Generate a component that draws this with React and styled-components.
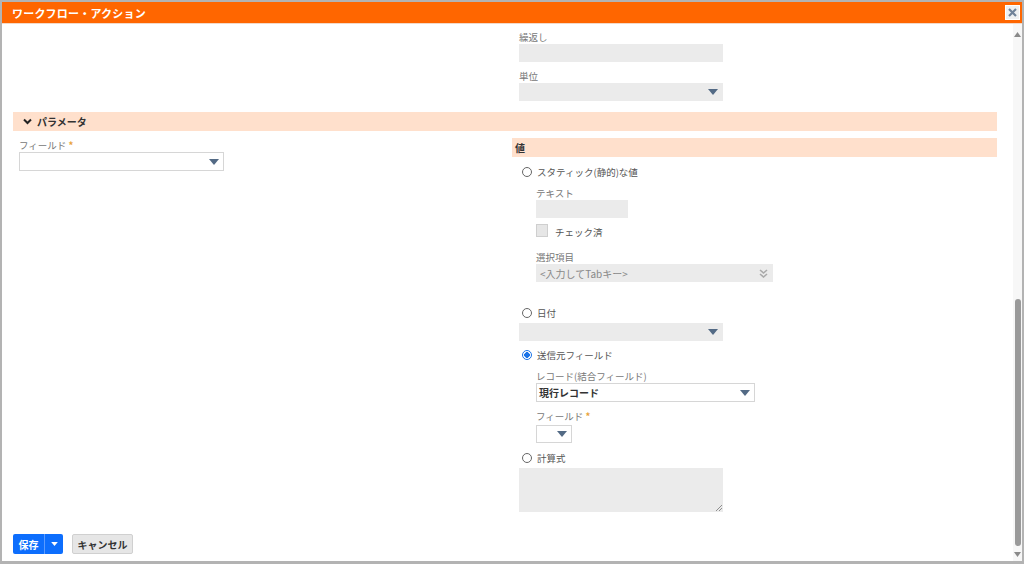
import React from "react";
import styled, { createGlobalStyle } from "styled-components";

const GlobalStyle = createGlobalStyle`
	html, body {
		margin: 0;
		padding: 0;
		background: #b3b3b3;
		font-family: "Noto Sans CJK JP", "Noto Sans", sans-serif;
	}
	* { box-sizing: border-box; }
`;

function Caret({ color = "#536a85" }) {
	return (
		<svg width="10" height="6" viewBox="0 0 10 6">
			<path d="M0 0 L10 0 L5 6 Z" fill={color} />
		</svg>
	);
}

function DoubleChevron() {
	return (
		<svg width="9" height="9" viewBox="0 0 9 9">
			<path d="M1 1 L4.5 4 L8 1 M1 5 L4.5 8 L8 5" stroke="#aaa" strokeWidth="1.6" fill="none" />
		</svg>
	);
}

function App() {
	return (
		<>
			<GlobalStyle />
			<Dialog>
				<TitleBar>
					<Title>ワークフロー・アクション</Title>
					<CloseBtn>
						<svg width="9" height="9" viewBox="0 0 9 9">
							<path d="M1 1 L8 8 M8 1 L1 8" stroke="#6f8299" strokeWidth="2.2" />
						</svg>
					</CloseBtn>
				</TitleBar>
				<Body>
					<Content>
						<TopGrid>
							<div />
							<Column>
								<Field indent={7}>
									<Label>繰返し</Label>
									<GreyInput w={204} />
								</Field>
								<Field indent={7} top={8}>
									<Label>単位</Label>
									<GreySelect w={204}>
										<span />
										<Caret />
									</GreySelect>
								</Field>
							</Column>
						</TopGrid>

						<SectionBar>
							<svg width="9" height="7" viewBox="0 0 9 7">
								<path d="M1 1.5 L4.5 5 L8 1.5" stroke="#222" strokeWidth="2" fill="none" />
							</svg>
							<SectionTitle>パラメータ</SectionTitle>
						</SectionBar>

						<ParamGrid>
							<Column>
								<Field indent={6} top={1}>
									<Label>
										フィールド <Star>*</Star>
									</Label>
									<WhiteSelect w={205} h={19}>
										<span />
										<Caret />
									</WhiteSelect>
								</Field>
							</Column>
							<Column>
								<ValueBar>値</ValueBar>

								<RadioRow top={8}>
									<Radio />
									<RadioLabel>スタティック(静的)な値</RadioLabel>
								</RadioRow>
								<Field indent={24} top={8}>
									<Label>テキスト</Label>
									<GreyInput w={92} />
								</Field>
								<CheckRow>
									<CheckBox />
									<CheckLabel>チェック済</CheckLabel>
								</CheckRow>
								<Field indent={24} top={13}>
									<Label>選択項目</Label>
									<GreySelect w={237}>
										<Placeholder>&lt;入力してTabキー&gt;</Placeholder>
										<DoubleChevron />
									</GreySelect>
								</Field>

								<RadioRow top={24}>
									<Radio />
									<RadioLabel>日付</RadioLabel>
								</RadioRow>
								<Field indent={7} top={3}>
									<GreySelect w={204}>
										<span />
										<Caret />
									</GreySelect>
								</Field>

								<RadioRow top={7}>
									<Radio checked />
									<RadioLabel>送信元フィールド</RadioLabel>
								</RadioRow>
								<Field indent={24} top={8}>
									<Label>レコード(結合フィールド)</Label>
									<WhiteSelect w={219} h={19}>
										<SelectValue>現行レコード</SelectValue>
										<Caret />
									</WhiteSelect>
								</Field>
								<Field indent={24} top={8}>
									<Label gap={2}>
										フィールド <Star>*</Star>
									</Label>
									<WhiteSelect w={36} h={18}>
										<span />
										<Caret />
									</WhiteSelect>
								</Field>

								<RadioRow top={8}>
									<Radio />
									<RadioLabel>計算式</RadioLabel>
								</RadioRow>
								<Field indent={7} top={3}>
									<TextArea>
										<svg width="6" height="6" viewBox="0 0 6 6">
											<path d="M0 6 L6 0 M3 6 L6 3" stroke="#777" strokeWidth="0.8" />
										</svg>
									</TextArea>
								</Field>
							</Column>
						</ParamGrid>

						<ButtonRow>
							<SplitButton>
								<PrimaryBtn>保存</PrimaryBtn>
								<PrimaryCaret>
									<Caret color="#fff" />
								</PrimaryCaret>
							</SplitButton>
							<SecondaryBtn>キャンセル</SecondaryBtn>
						</ButtonRow>
					</Content>
					<ScrollTrack>
						<ScrollArrow>
							<svg width="7" height="5" viewBox="0 0 7 5">
								<path d="M0 5 L3.5 0 L7 5 Z" fill="#8a8a8a" />
							</svg>
						</ScrollArrow>
						<ScrollSpace />
						<ScrollThumb />
						<ScrollArrow down>
							<svg width="7" height="5" viewBox="0 0 7 5">
								<path d="M0 0 L7 0 L3.5 5 Z" fill="#8a8a8a" />
							</svg>
						</ScrollArrow>
					</ScrollTrack>
				</Body>
			</Dialog>
		</>
	);
}

export default App;

const Dialog = styled.div`
	width: 1020px;
	height: 559px;
	margin: 2px 2px 3px 2px;
	background: #fff;
	display: flex;
	flex-direction: column;
	overflow: hidden;
`;

const TitleBar = styled.div`
	height: 21px;
	background: #ff6600;
	display: flex;
	align-items: center;
	justify-content: space-between;
	padding: 0 2px 0 10px;
	flex-shrink: 0;
`;

const Title = styled.div`
	color: #fff;
	font-size: 11px;
	font-weight: 700;
	letter-spacing: 0.2px;
`;

const CloseBtn = styled.div`
	width: 15px;
	height: 15px;
	background: #eef0f2;
	border: 1px solid #fff;
	display: flex;
	align-items: center;
	justify-content: center;
`;

const Body = styled.div`
	flex: 1;
	display: flex;
	min-height: 0;
	border-top: 1px solid #f3d9c8;
`;

const Content = styled.div`
	flex: 1;
	padding: 7px 16px 0 11px;
	display: flex;
	flex-direction: column;
	overflow: hidden;
`;

const TopGrid = styled.div`
	display: grid;
	grid-template-columns: 485px 485px;
	column-gap: 14px;
`;

const ParamGrid = styled.div`
	display: grid;
	grid-template-columns: 485px 485px;
	column-gap: 14px;
	margin-top: 7px;
`;

const Column = styled.div`
	display: flex;
	flex-direction: column;
`;

const Field = styled.div`
	display: flex;
	flex-direction: column;
	padding-left: ${(p) => p.indent || 0}px;
	margin-top: ${(p) => p.top || 0}px;
`;

const Label = styled.div`
	height: 13px;
	line-height: 13px;
	font-size: 9.5px;
	color: #777;
	margin-bottom: ${(p) => p.gap || 0}px;
	white-space: nowrap;
`;

const Star = styled.span`
	color: #e8a33a;
	font-weight: 700;
`;

const GreyInput = styled.div`
	width: ${(p) => p.w}px;
	height: 18px;
	background: #ebebeb;
`;

const GreySelect = styled.div`
	width: ${(p) => p.w}px;
	height: 18px;
	background: #ebebeb;
	display: flex;
	align-items: center;
	justify-content: space-between;
	padding: 0 5px 0 4px;
`;

const WhiteSelect = styled.div`
	width: ${(p) => p.w}px;
	height: ${(p) => p.h}px;
	background: #fff;
	border: 1px solid #d6d6d6;
	display: flex;
	align-items: center;
	justify-content: space-between;
	padding: 0 4px 0 2px;
`;

const SelectValue = styled.span`
	font-size: 10px;
	font-weight: 700;
	color: #333;
`;

const Placeholder = styled.span`
	font-size: 10px;
	color: #888;
`;

const SectionBar = styled.div`
	margin-top: 11px;
	height: 19px;
	background: #ffe0cc;
	display: flex;
	align-items: center;
	gap: 5px;
	padding-left: 10px;
`;

const SectionTitle = styled.span`
	font-size: 10px;
	font-weight: 700;
	color: #333;
`;

const ValueBar = styled.div`
	height: 19px;
	background: #ffe0cc;
	font-size: 10px;
	font-weight: 700;
	color: #333;
	line-height: 19px;
	padding-left: 3px;
`;

const RadioRow = styled.div`
	height: 14px;
	display: flex;
	align-items: center;
	gap: 5px;
	padding-left: 10px;
	margin-top: ${(p) => p.top || 0}px;
`;

const Radio = styled.span`
	width: 10px;
	height: 10px;
	border-radius: 50%;
	border: 1px solid ${(p) => (p.checked ? "#1a73e8" : "#666")};
	background: ${(p) => (p.checked ? "radial-gradient(circle, #1a73e8 0 2.6px, #fff 3px)" : "#fff")};
	flex-shrink: 0;
`;

const RadioLabel = styled.span`
	font-size: 9.5px;
	color: #555;
`;

const CheckRow = styled.div`
	margin-top: 6px;
	padding-left: 24px;
	display: flex;
	align-items: flex-end;
	gap: 7px;
	height: 14px;
`;

const CheckBox = styled.span`
	width: 12px;
	height: 13px;
	background: #e6e6e6;
	border: 1px solid #cfcfcf;
	align-self: flex-start;
`;

const CheckLabel = styled.span`
	font-size: 9.5px;
	color: #555;
	line-height: 12px;
`;

const TextArea = styled.div`
	width: 204px;
	height: 44px;
	background: #ebebeb;
	display: flex;
	align-items: flex-end;
	justify-content: flex-end;
	padding: 0 1px 1px 0;
`;

const ButtonRow = styled.div`
	margin-top: 22px;
	display: flex;
	align-items: center;
	gap: 9px;
`;

const SplitButton = styled.div`
	display: flex;
	height: 20px;
	border-radius: 2px;
	overflow: hidden;
`;

const PrimaryBtn = styled.div`
	width: 32px;
	background: #0d6efd;
	color: #fff;
	font-size: 10px;
	font-weight: 700;
	display: flex;
	align-items: center;
	justify-content: center;
	border-right: 1px solid #5a9bff;
`;

const PrimaryCaret = styled.div`
	width: 18px;
	background: #0d6efd;
	display: flex;
	align-items: center;
	justify-content: center;

	svg {
		width: 7px;
		height: 4px;
	}
`;

const SecondaryBtn = styled.div`
	width: 61px;
	height: 20px;
	background: #e6e6e6;
	border: 1px solid #d0d0d0;
	border-radius: 2px;
	color: #333;
	font-size: 10px;
	font-weight: 700;
	display: flex;
	align-items: center;
	justify-content: center;
`;

const ScrollTrack = styled.div`
	width: 9px;
	background: #f7f7f7;
	display: flex;
	flex-direction: column;
	align-items: center;
	padding-bottom: 2px;
`;

const ScrollArrow = styled.div`
	height: ${(p) => (p.down ? 10 : 13)}px;
	display: flex;
	align-items: ${(p) => (p.down ? "center" : "flex-end")};
	justify-content: center;
`;

const ScrollSpace = styled.div`
	flex: 1;
`;

const ScrollThumb = styled.div`
	width: 6px;
	height: 247px;
	background: #9a9a9a;
	border-radius: 3px;
	margin-bottom: 3px;
`;
